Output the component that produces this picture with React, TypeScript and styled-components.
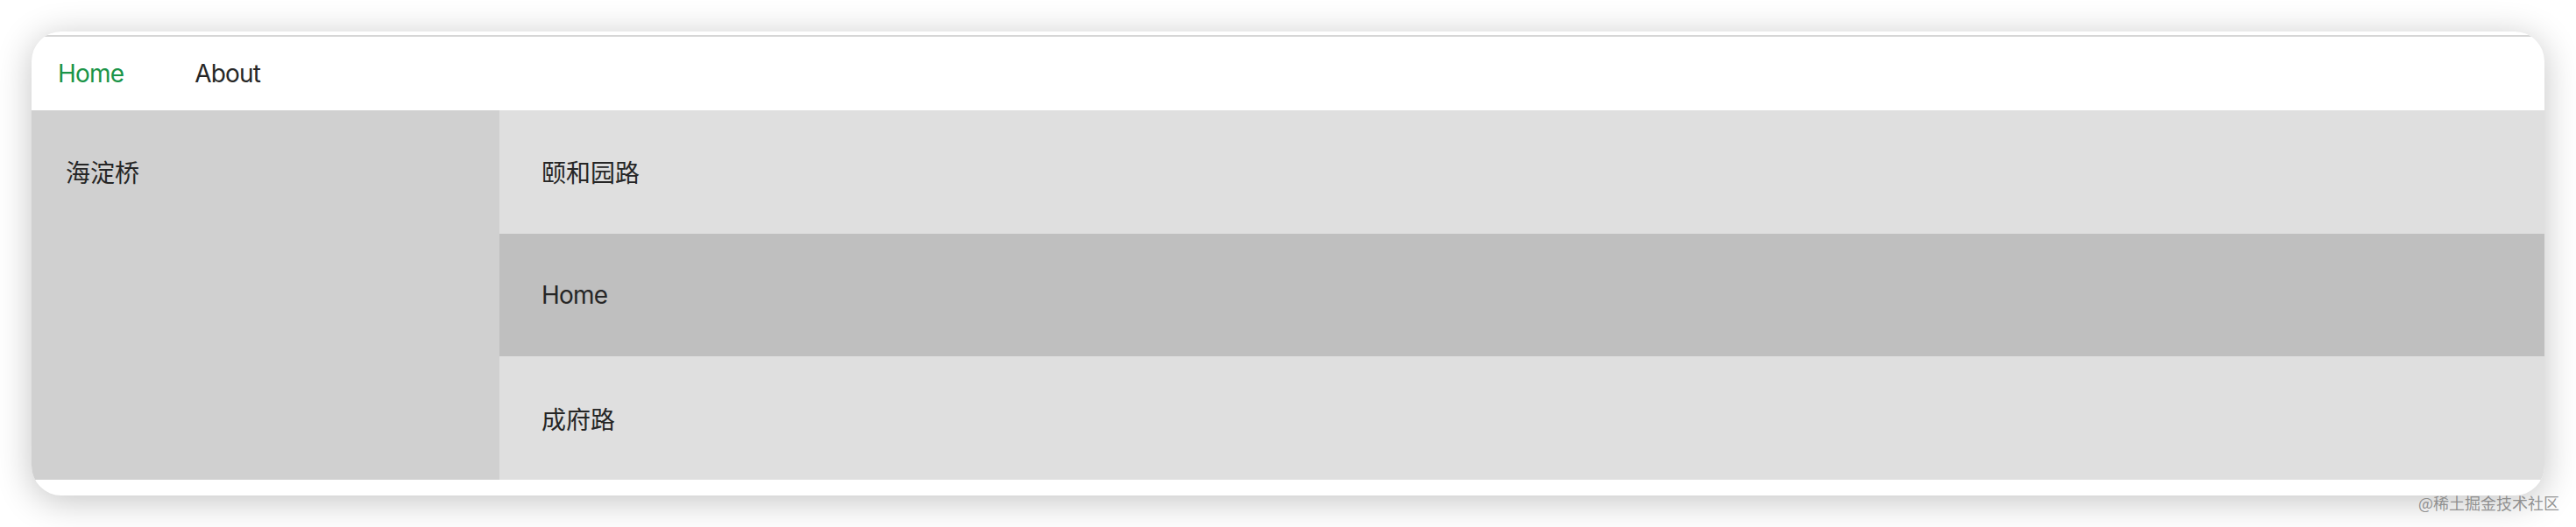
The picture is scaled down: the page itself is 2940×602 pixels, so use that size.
import React from "react";
import styled, { createGlobalStyle } from "styled-components";

const GlobalStyle = createGlobalStyle`
  html, body {
    margin: 0;
    padding: 0;
    background: #ffffff;
    overflow: hidden;
  }
  body {
    font-family: Inter, "Noto Sans CJK SC", "Noto Sans", sans-serif;
    color: #262626;
  }
`;

const Page = styled.div`
  position: relative;
  width: 2940px;
  height: 602px;
  box-sizing: border-box;
  padding: 36px 36px 0 36px;
`;

const Card = styled.div`
  background: #ffffff;
  border-radius: 34px;
  overflow: hidden;
  box-shadow: 0 6px 40px rgba(0, 0, 0, 0.24);
  padding: 4px 0 18px 0;
`;

const TopRule = styled.div`
  height: 2px;
  background: #d6d6d6;
`;

const Nav = styled.nav`
  height: 84px;
  display: flex;
  align-items: center;
  gap: 81px;
  padding-left: 30px;
`;

const NavLink = styled.a<{ $active?: boolean }>`
  font-size: 28px;
  line-height: 1;
  letter-spacing: -0.8px;
  text-decoration: none;
  color: ${(p) => (p.$active ? "#1a9448" : "#262626")};
  cursor: pointer;
`;

const Body = styled.div`
  display: flex;
  height: 422px;
`;

const Sidebar = styled.div`
  width: 534px;
  flex: none;
  background: #d0d0d0;
`;

const SideItem = styled.div`
  height: 140px;
  display: flex;
  align-items: center;
  padding-left: 39px;
  font-size: 28px;
`;

const List = styled.div`
  flex: 1;
  display: flex;
  flex-direction: column;
`;

const Row = styled.div<{ $hover?: boolean; $latin?: boolean }>`
  flex: 1;
  display: flex;
  align-items: center;
  padding-left: 48px;
  font-size: 28px;
  letter-spacing: ${(p) => (p.$latin ? "-0.8px" : "0")};
  background: ${(p) => (p.$hover ? "#bfbfbf" : "#dfdfdf")};
`;

const Watermark = styled.div`
  position: absolute;
  right: 19px;
  top: 563px;
  font-size: 18px;
  line-height: 22px;
  color: rgba(120, 120, 120, 0.8);
  font-family: "Noto Sans CJK SC", sans-serif;
`;

const rows = [
  { label: "颐和园路", hover: false, latin: false },
  { label: "Home", hover: true, latin: true },
  { label: "成府路", hover: false, latin: false },
];

export default function App() {
  return (
    <>
      <GlobalStyle />
      <Page>
        <Card>
          <TopRule />
          <Nav>
            <NavLink $active>Home</NavLink>
            <NavLink>About</NavLink>
          </Nav>
          <Body>
            <Sidebar>
              <SideItem>海淀桥</SideItem>
            </Sidebar>
            <List>
              {rows.map((r) => (
                <Row key={r.label} $hover={r.hover} $latin={r.latin}>
                  {r.label}
                </Row>
              ))}
            </List>
          </Body>
        </Card>
        <Watermark>@稀土掘金技术社区</Watermark>
      </Page>
    </>
  );
}
